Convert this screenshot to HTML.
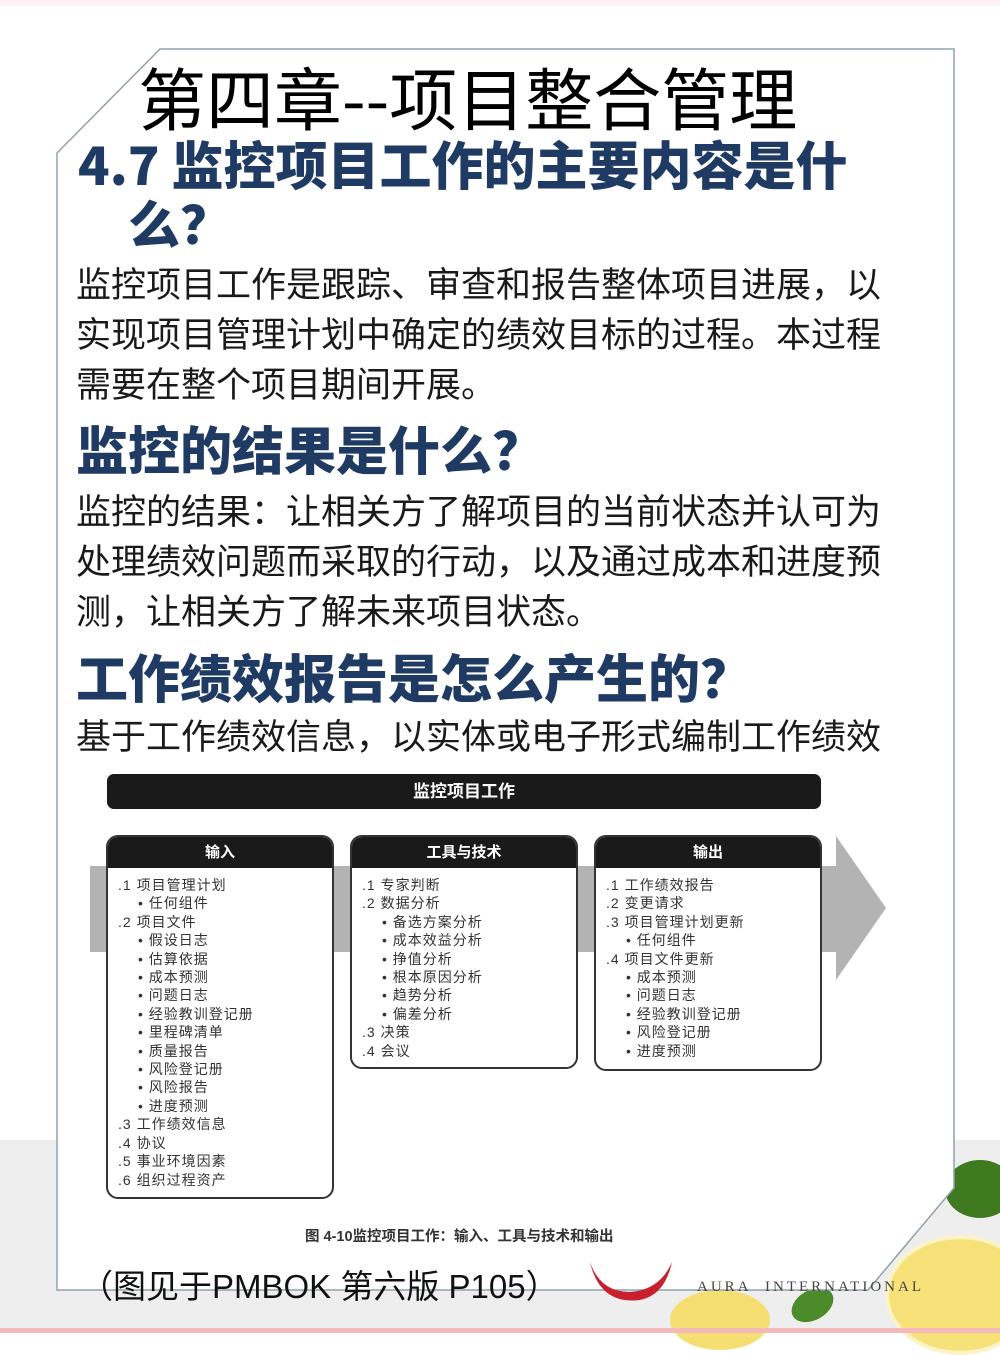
<!DOCTYPE html>
<html><head><meta charset="utf-8">
<style>
*{margin:0;padding:0;box-sizing:border-box}
body{width:1000px;height:1333px;position:relative;overflow:hidden;background:#fff;font-family:"Liberation Sans","Noto Sans CJK SC",sans-serif}
.a{position:absolute;white-space:nowrap}
.h{color:#1f3b63;font-weight:900;font-size:52px;line-height:60px;font-family:"Noto Sans CJK SC",sans-serif}
.b{color:#1a1a1a;font-size:35px;line-height:50px;font-family:"Noto Sans CJK SC",sans-serif}
.box{position:absolute;border:2px solid #333;border-radius:12px;background:#fff;overflow:hidden}
.box .hd{background:#1a1a1a;color:#fff;font-weight:bold;font-size:15px;height:31px;line-height:31px;text-align:center}
.box .it{font-size:14px;letter-spacing:1px;line-height:18.4px;color:#333;padding:8px 0 0 10px}
.it div{white-space:nowrap}
.s{padding-left:20px}
</style></head><body>
<div class="a" style="left:0;top:1140px;width:1000px;height:193px;background:#eeeeee"></div>
<div class="a" style="left:945px;top:1160px;width:70px;height:58px;border-radius:50%;background:#3f7a20"></div>
<div class="a" style="left:885px;top:1235px;width:150px;height:120px;border-radius:50%;background:#f7e27a;border:4px solid #fbf4c8"></div>
<div class="a" style="left:670px;top:1290px;width:100px;height:60px;border-radius:50%;background:#f6df72"></div>
<div class="a" style="left:790px;top:1290px;width:45px;height:30px;border-radius:50%;background:#4d8b2a;transform:rotate(-30deg)"></div>
<svg class="a" style="left:0;top:0" width="1000" height="1333">
<polygon points="160,49 954,49 954,1188 868,1290 57,1290 57,153" fill="#fff" stroke="#8fa3a8" stroke-width="1.5"/>
<path d="M590 1262 Q600 1305 640 1300 Q665 1295 672 1262 Q660 1290 630 1292 Q600 1292 590 1262Z" fill="#c8202f"/>
</svg>
<div class="a" style="left:697px;top:1279px;font-family:'Liberation Serif',serif;font-size:15px;letter-spacing:3px;color:#444">AURA&nbsp; INTERNATIONAL</div>
<div class="a" style="left:0;top:1328px;width:1000px;height:5px;background:#f4b9bb"></div>
<div class="a" style="left:0;top:0;width:1000px;height:6px;background:#fdf3f4"></div>

<div class="a" style="left:138px;top:56px;font-family:'Noto Sans CJK SC',sans-serif;font-size:68px;line-height:80px;color:#000">第四章--项目整合管理</div>
<div class="a h" style="left:78px;top:133px">4.7 监控项目工作的主要内容是什</div>
<div class="a h" style="left:128px;top:192px">么？</div>
<div class="a b" style="left:76px;top:258px">监控项目工作是跟踪、审查和报告整体项目进展，以</div>
<div class="a b" style="left:76px;top:308px">实现项目管理计划中确定的绩效目标的过程。本过程</div>
<div class="a b" style="left:76px;top:358px">需要在整个项目期间开展。</div>
<div class="a h" style="left:76px;top:418px">监控的结果是什么？</div>
<div class="a b" style="left:76px;top:485px">监控的结果：让相关方了解项目的当前状态并认可为</div>
<div class="a b" style="left:76px;top:535px">处理绩效问题而采取的行动，以及通过成本和进度预</div>
<div class="a b" style="left:76px;top:585px">测，让相关方了解未来项目状态。</div>
<div class="a h" style="left:76px;top:646px">工作绩效报告是怎么产生的？</div>
<div class="a b" style="left:76px;top:710px">基于工作绩效信息，以实体或电子形式编制工作绩效</div>

<div class="a" style="left:107px;top:774px;width:714px;height:35px;background:#1a1a1a;border-radius:7px;color:#fff;font-weight:bold;font-size:17px;line-height:35px;text-align:center">监控项目工作</div>
<div class="a" style="left:90px;top:866px;width:750px;height:86px;background:#b3b3b3"></div>
<svg class="a" style="left:836px;top:836px" width="52" height="146"><polygon points="0,0 50,72 0,144" fill="#b3b3b3"/></svg>

<div class="box" style="left:106px;top:835px;width:228px;height:364px">
<div class="hd">输入</div>
<div class="it">
<div>.1 项目管理计划</div><div class="s">• 任何组件</div>
<div>.2 项目文件</div><div class="s">• 假设日志</div><div class="s">• 估算依据</div><div class="s">• 成本预测</div><div class="s">• 问题日志</div><div class="s">• 经验教训登记册</div><div class="s">• 里程碑清单</div><div class="s">• 质量报告</div><div class="s">• 风险登记册</div><div class="s">• 风险报告</div><div class="s">• 进度预测</div>
<div>.3 工作绩效信息</div><div>.4 协议</div><div>.5 事业环境因素</div><div>.6 组织过程资产</div>
</div></div>

<div class="box" style="left:350px;top:835px;width:228px;height:234px">
<div class="hd">工具与技术</div>
<div class="it">
<div>.1 专家判断</div><div>.2 数据分析</div><div class="s">• 备选方案分析</div><div class="s">• 成本效益分析</div><div class="s">• 挣值分析</div><div class="s">• 根本原因分析</div><div class="s">• 趋势分析</div><div class="s">• 偏差分析</div><div>.3 决策</div><div>.4 会议</div>
</div></div>

<div class="box" style="left:594px;top:835px;width:228px;height:236px">
<div class="hd">输出</div>
<div class="it">
<div>.1 工作绩效报告</div><div>.2 变更请求</div><div>.3 项目管理计划更新</div><div class="s">• 任何组件</div><div>.4 项目文件更新</div><div class="s">• 成本预测</div><div class="s">• 问题日志</div><div class="s">• 经验教训登记册</div><div class="s">• 风险登记册</div><div class="s">• 进度预测</div>
</div></div>

<div class="a" style="left:305px;top:1227px;font-size:14.5px;font-weight:bold;color:#333;line-height:20px">图 4-10监控项目工作：输入、工具与技术和输出</div>
<div class="a" style="left:80px;top:1264px;font-size:33px;line-height:46px;color:#111">（图见于PMBOK 第六版 P105）</div>
</body></html>
